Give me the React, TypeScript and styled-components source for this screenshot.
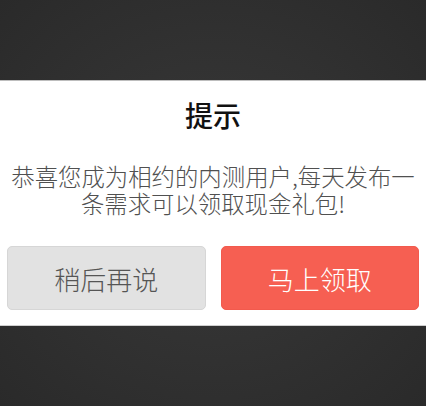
import React from "react";
import styled, { createGlobalStyle } from "styled-components";

const GlobalStyle = createGlobalStyle`
    html, body {
        margin: 0;
        padding: 0;
        height: 100%;
    }
    body {
        font-family: "Noto Sans CJK SC", "Noto Sans", sans-serif;
        background: #2e2e2e;
    }
`;

const App: React.FC = () => {
    const later = () => {
        console.log('later');
    };

    const claim = () => {
        console.log('claim');
    };

    return (
        <>
            <GlobalStyle />
            <Overlay>
                <Dialog>
                    <Title>提示</Title>
                    <Message>
                        恭喜您成为相约的内测用户,每天发布一条需求可以领取现金礼包!
                    </Message>
                    <ButtonRow>
                        <ActionButton onClick={later}>稍后再说</ActionButton>
                        <ActionButton primary onClick={claim}>马上领取</ActionButton>
                    </ButtonRow>
                </Dialog>
            </Overlay>
        </>
    );
};

const Overlay = styled.div`
    min-height: 100vh;
    display: flex;
    align-items: center;
    background: radial-gradient(ellipse at center, #393939 0%, #313131 55%, #2a2a2a 100%);
`;

const Dialog = styled.div`
    width: 100%;
    box-sizing: border-box;
    background: #fff;
    border-top: 1px solid #bdbdbd;
    border-bottom: 1px solid #cfcfcf;
    padding: 17px 7px 15px;
    display: flex;
    flex-direction: column;
`;

const Title = styled.h3`
    margin: 0;
    font-size: 28px;
    line-height: 34px;
    font-weight: 500;
    color: #111;
    text-align: center;
`;

const Message = styled.p`
    margin: 31px 0 0;
    padding: 0;
    font-size: 23.4px;
    line-height: 27px;
    font-weight: 300;
    color: #505050;
    text-align: center;
`;

const ButtonRow = styled.div`
    margin-top: 29px;
    display: grid;
    grid-template-columns: 1fr 1fr;
    gap: 15px;
`;

const ActionButton = styled.button<{ primary?: boolean }>`
    height: 64px;
    border-radius: 5px;
    border: 1px solid ${(p) => (p.primary ? '#f25a4d' : '#d6d6d6')};
    background: ${(p) => (p.primary ? '#f65f52' : '#e2e2e2')};
    color: ${(p) => (p.primary ? '#fff' : '#555')};
    font-family: inherit;
    font-size: 26px;
    font-weight: 300;
    padding: 0;
    cursor: pointer;
`;

export default App;
